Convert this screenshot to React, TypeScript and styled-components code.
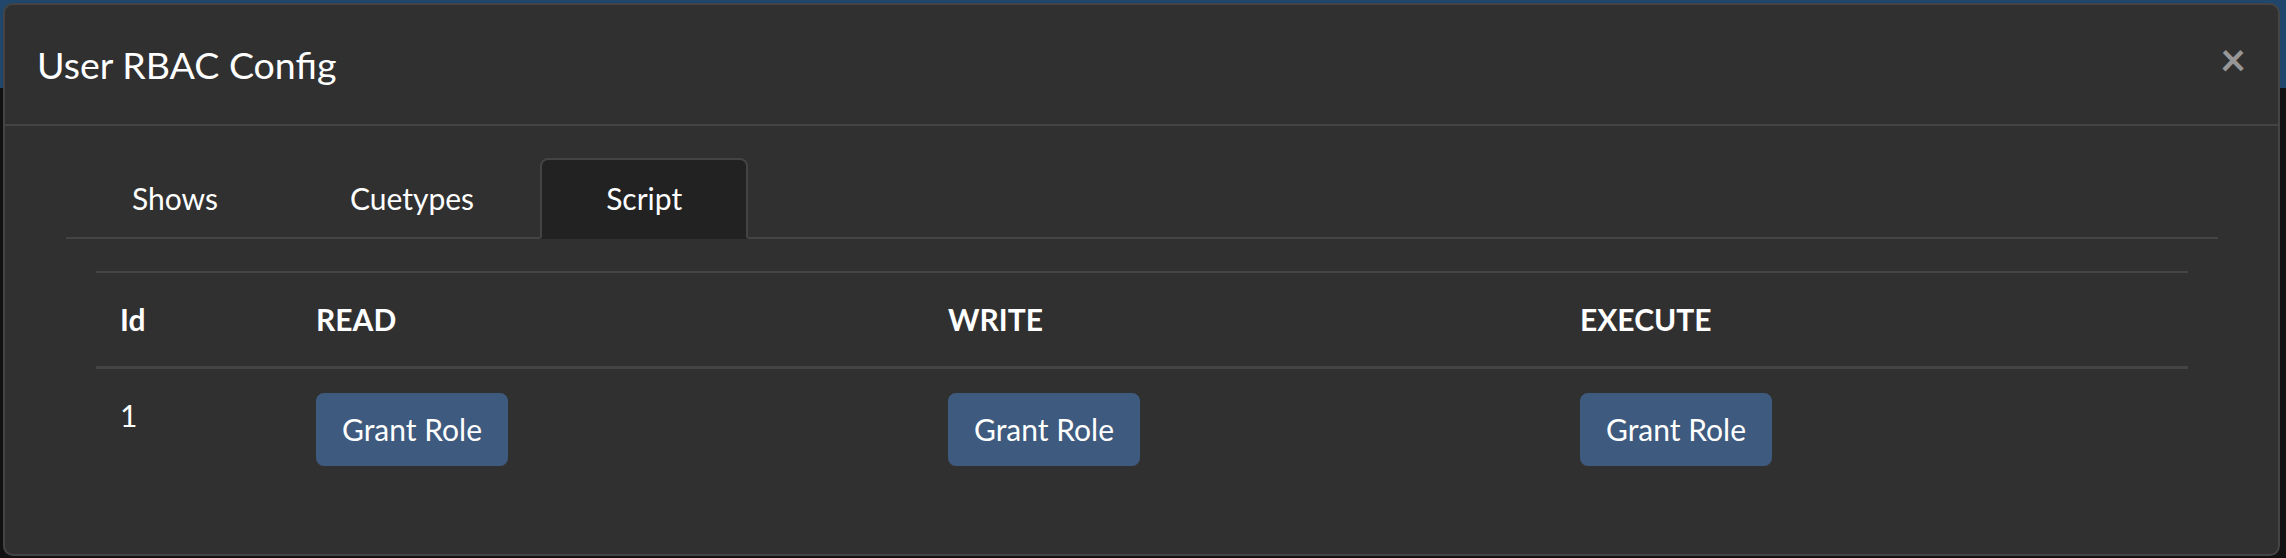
import React from "react";
import styled, { createGlobalStyle } from "styled-components";

const GlobalStyle = createGlobalStyle`
  html, body {
    margin: 0;
    padding: 0;
    background: #111111;
  }
  body {
    font-family: Lato, "Open Sans", "Liberation Sans", sans-serif;
    color: #ffffff;
  }
  * { box-sizing: border-box; }
`;

const Backdrop = styled.div`
  width: 2286px;
  height: 558px;
  padding: 3px 0 0 3px;
  background: linear-gradient(#21466c 0 88px, #111111 88px 100%);
  overflow: hidden;
`;

const Modal = styled.div`
  width: 2277px;
  background: #303030;
  border: 2px solid #444444;
  border-radius: 10px;
  display: flex;
  flex-direction: column;
`;

const Header = styled.div`
  display: flex;
  align-items: flex-start;
  justify-content: space-between;
  padding: 32px 32px 31px;
  border-bottom: 2px solid #444444;
`;

const Title = styled.h5`
  margin: 0;
  font-size: 37.5px;
  line-height: 56px;
  font-weight: 400;
  color: #ffffff;
`;

const CloseButton = styled.button`
  margin: -32px -32px -32px auto;
  padding: 32px;
  border: 0;
  background: transparent;
  font-family: Lato, "Liberation Sans", sans-serif;
  font-size: 45px;
  line-height: 1;
  font-weight: 700;
  color: rgba(255, 255, 255, 0.5);
  cursor: pointer;
`;

const Body = styled.div`
  padding: 32px;
`;

const Tabs = styled.div`
  margin: 0 28px 0 29px;
`;

const TabNav = styled.div`
  display: flex;
  border-bottom: 2px solid #444444;
`;

const Tab = styled.div<{ $active?: boolean }>`
  padding: 16px 64px;
  margin-bottom: -2px;
  font-size: 30px;
  line-height: 45px;
  color: #ffffff;
  border: 2px solid ${(p) => (p.$active ? "#444444" : "transparent")};
  border-bottom-color: transparent;
  border-radius: 8px 8px 0 0;
  background: ${(p) => (p.$active ? "#222222" : "transparent")};
`;

const Pane = styled.div`
  padding: 32px 30px 32px;
`;

const Table = styled.div`
  display: grid;
  grid-template-columns: 196px repeat(3, 1fr);
  border-top: 2px solid #444444;
`;

const HeadCell = styled.div`
  padding: 24px;
  font-size: 30px;
  line-height: 45px;
  font-weight: 700;
  color: #ffffff;
  border-bottom: 3px solid #444444;
`;

const Cell = styled.div`
  padding: 24px;
  font-size: 30px;
  line-height: 45px;
  color: #ffffff;
`;

const GrantButton = styled.button`
  font-family: Lato, "Liberation Sans", sans-serif;
  font-size: 30px;
  line-height: 45px;
  padding: 12px 24px;
  border: 2px solid #3e5a7e;
  border-radius: 8px;
  background: #3e5a7e;
  color: #ffffff;
  cursor: pointer;
`;

const columns = ["READ", "WRITE", "EXECUTE"];

export default function App() {
  return (
    <>
      <GlobalStyle />
      <Backdrop>
        <Modal>
          <Header>
            <Title>User RBAC Config</Title>
            <CloseButton aria-label="Close">×</CloseButton>
          </Header>
          <Body>
            <Tabs>
              <TabNav>
                <Tab>Shows</Tab>
                <Tab>Cuetypes</Tab>
                <Tab $active>Script</Tab>
              </TabNav>
              <Pane>
                <Table>
                  <HeadCell>Id</HeadCell>
                  {columns.map((c) => (
                    <HeadCell key={c}>{c}</HeadCell>
                  ))}
                  <Cell>1</Cell>
                  {columns.map((c) => (
                    <Cell key={c}>
                      <GrantButton>Grant Role</GrantButton>
                    </Cell>
                  ))}
                </Table>
              </Pane>
            </Tabs>
          </Body>
        </Modal>
      </Backdrop>
    </>
  );
}
